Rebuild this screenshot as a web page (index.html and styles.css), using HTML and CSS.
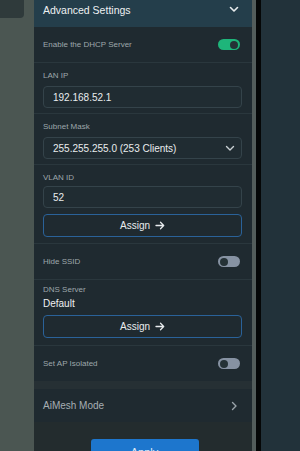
FILE: index.html
```html
<!DOCTYPE html>
<html>
<head>
<meta charset="utf-8">
<link rel="stylesheet" href="styles.css">
</head>
<body>
<div class="page">
  <div class="left"><div class="tab"></div></div>
  <div class="panel">
    <div class="header">
      <span class="title">Advanced Settings</span>
      <svg class="chev" width="10" height="7" viewBox="0 0 10 7"><path d="M1.5 1.5 L5 5 L8.5 1.5" fill="none" stroke="#e8ecee" stroke-width="1.6" stroke-linecap="round" stroke-linejoin="round"/></svg>
    </div>
    <div class="section">
      <div class="row toggle-row">
        <span class="label">Enable the DHCP Server</span>
        <span class="toggle on"><span class="knob"></span></span>
      </div>
      <div class="row field-row">
        <span class="label">LAN IP</span>
        <div class="input">192.168.52.1</div>
      </div>
      <div class="row field-row">
        <span class="label">Subnet Mask</span>
        <div class="input select">
          <span>255.255.255.0 (253 Clients)</span>
          <svg width="10" height="7" viewBox="0 0 10 7"><path d="M1.5 1.5 L5 5 L8.5 1.5" fill="none" stroke="#c9d0d4" stroke-width="1.4" stroke-linecap="round" stroke-linejoin="round"/></svg>
        </div>
      </div>
      <div class="row field-row vlan">
        <span class="label">VLAN ID</span>
        <div class="input">52</div>
        <div class="assign">Assign <svg width="10" height="9" viewBox="0 0 10 9"><path d="M1 4.5 H8.5 M5.5 1.3 L8.7 4.5 L5.5 7.7" fill="none" stroke="#e8ecee" stroke-width="1.3" stroke-linecap="round" stroke-linejoin="round"/></svg></div>
      </div>
      <div class="row toggle-row">
        <span class="label">Hide SSID</span>
        <span class="toggle off"><span class="knob"></span></span>
      </div>
      <div class="row field-row dns">
        <span class="label">DNS Server</span>
        <span class="value">Default</span>
        <div class="assign">Assign <svg width="10" height="9" viewBox="0 0 10 9"><path d="M1 4.5 H8.5 M5.5 1.3 L8.7 4.5 L5.5 7.7" fill="none" stroke="#e8ecee" stroke-width="1.3" stroke-linecap="round" stroke-linejoin="round"/></svg></div>
      </div>
      <div class="row toggle-row last">
        <span class="label">Set AP Isolated</span>
        <span class="toggle off"><span class="knob"></span></span>
      </div>
    </div>
    <div class="gap"></div>
    <div class="mesh">
      <span>AiMesh Mode</span>
      <svg width="7" height="10" viewBox="0 0 7 10"><path d="M1.5 1.5 L5 5 L1.5 8.5" fill="none" stroke="#9aa4aa" stroke-width="1.4" stroke-linecap="round" stroke-linejoin="round"/></svg>
    </div>
    <div class="footer">
      <div class="apply">Apply</div>
    </div>
  </div>
  <div class="edge"></div>
  <div class="black"></div>
  <div class="right"></div>
</div>
</body>
</html>
```
FILE: styles.css
```css
html, body {
  margin: 0;
  padding: 0;
}
body {
  width: 300px;
  height: 451px;
  overflow: hidden;
  background: #4b5652;
  font-family: "Liberation Sans", Arial, sans-serif;
}
.page {
  display: flex;
  height: 451px;
}
.left {
  width: 34px;
  flex: none;
  background: #4b5652;
}
.tab {
  width: 24px;
  height: 18px;
  background: #2f3a3b;
  border-bottom-right-radius: 4px;
}
.panel {
  width: 218px;
  flex: none;
  background: #1f2a30;
  display: flex;
  flex-direction: column;
}
.edge {
  width: 4px;
  flex: none;
  background: #535d5b;
}
.black {
  width: 5px;
  flex: none;
  background: #050707;
}
.right {
  flex: 1;
  background: #22323a;
}
.header {
  height: 27px;
  flex: none;
  background: #243e4b;
  display: flex;
  align-items: center;
  justify-content: space-between;
  padding: 0 13px 0 9px;
  box-sizing: border-box;
}
.title {
  color: #eef1f2;
  font-size: 10.5px;
  margin-top: -8px;
}
.chev {
  margin-top: -8px;
}
.section {
  display: flex;
  flex-direction: column;
}
.row {
  border-bottom: 1px solid #2a373d;
  padding: 0 10px 0 9px;
}
.row.last {
  border-bottom: none;
}
.toggle-row {
  height: 35px;
  display: flex;
  align-items: center;
  justify-content: space-between;
  padding-right: 12px;
}
.label {
  color: #9ea7ab;
  font-size: 8px;
  line-height: 10px;
}
.toggle {
  width: 22px;
  height: 11px;
  border-radius: 6px;
  display: flex;
  align-items: center;
  box-sizing: border-box;
  padding: 0 2px;
}
.toggle.on {
  background: #1eb57a;
  justify-content: flex-end;
}
.toggle.off {
  background: #8692a2;
  justify-content: flex-start;
}
.knob {
  width: 8px;
  height: 8px;
  border-radius: 50%;
  background: #253236;
}
.field-row {
  display: flex;
  flex-direction: column;
  padding-top: 8px;
  padding-bottom: 5px;
}
.field-row .label {
  margin-bottom: 5px;
}
.input {
  height: 22px;
  box-sizing: border-box;
  border: 1px solid #34434a;
  border-radius: 4px;
  background: #202c32;
  color: #e9ecee;
  font-size: 10px;
  display: flex;
  align-items: center;
  padding: 0 9px;
}
.select {
  justify-content: space-between;
  padding-right: 6px;
}
.vlan .label {
  margin-bottom: 3px;
}
.vlan {
  padding-bottom: 6px;
}
.assign {
  margin-top: 6px;
  height: 23px;
  box-sizing: border-box;
  border: 1px solid #2a6299;
  border-radius: 4px;
  color: #e9ecee;
  font-size: 10px;
  display: flex;
  align-items: center;
  justify-content: center;
  gap: 5px;
}
.dns {
  padding-top: 5px;
  padding-bottom: 7px;
}
.dns .label {
  margin-bottom: 3px;
}
.value {
  color: #eef1f2;
  font-size: 10px;
  line-height: 12px;
}
.dns .assign {
  margin-top: 5px;
}
.gap {
  height: 8px;
  flex: none;
  background: #263034;
}
.mesh {
  height: 33px;
  flex: none;
  display: flex;
  align-items: center;
  justify-content: space-between;
  padding: 0 14px 0 9px;
  color: #a6aeb3;
  font-size: 10px;
}
.footer {
  flex: 1;
  background: #232c2e;
  display: flex;
  justify-content: center;
  align-items: flex-start;
  padding-top: 17px;
}
.apply {
  width: 108px;
  height: 20px;
  background: #1d76cd;
  border-radius: 3px 3px 0 0;
  color: #dfe9f5;
  font-size: 11px;
  text-align: center;
  line-height: 26px;
  margin-left: 3px;
}
```
